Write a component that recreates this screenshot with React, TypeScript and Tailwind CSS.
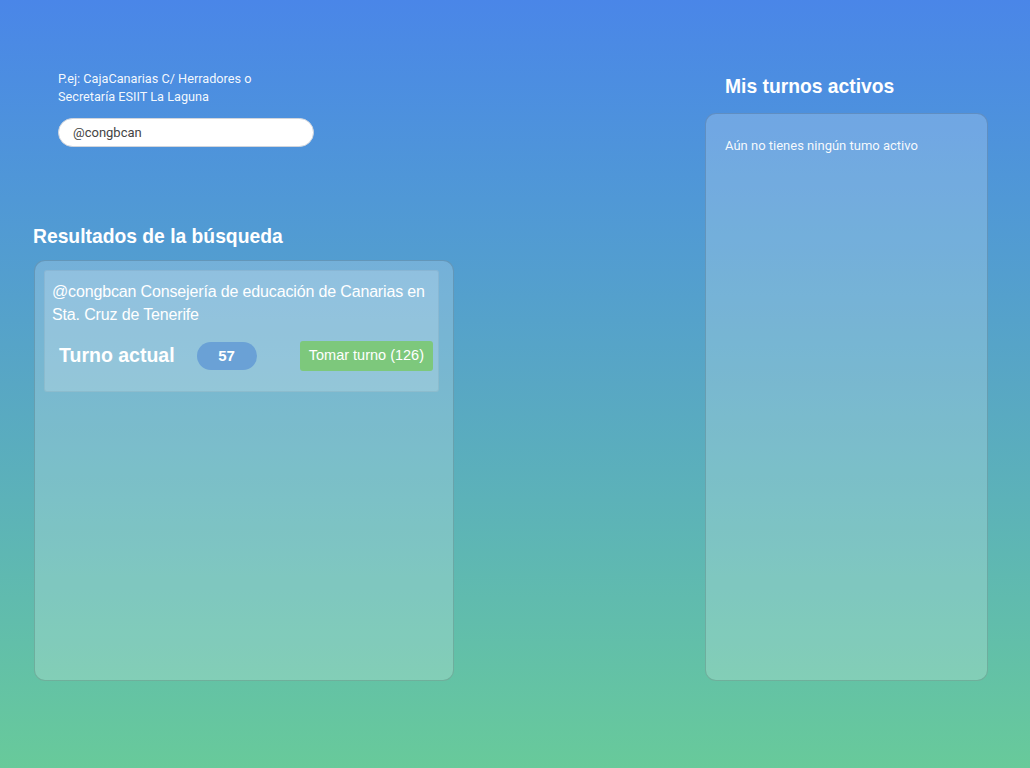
import React from "react";

const sans = { fontFamily: '"Liberation Sans", Arial, sans-serif' };
const roboto = { fontFamily: 'Roboto, "Liberation Sans", sans-serif' };

function SearchBox() {
  return (
    <div className="pl-[25px]" style={roboto}>
      <p className="text-[12.7px] leading-[18px] text-white/95">
        P.ej: CajaCanarias C/ Herradores o
        <br />
        Secretaría ESIIT La Laguna
      </p>
      <div className="mt-[12px] flex h-[29px] w-[256px] items-center rounded-full border border-gray-300 bg-white pl-[14px]">
        <span className="text-[13px] text-[#444]">@congbcan</span>
      </div>
    </div>
  );
}

function ResultCard() {
  return (
    <div className="mr-[14px] rounded-[3px] border border-black/5 bg-white/20 pt-[9px] pr-[5px] pb-[20px] pl-[7px]">
      <p className="text-[16px] leading-[23px] tracking-[-0.15px] text-white" style={sans}>
        @congbcan Consejería de educación de Canarias en Sta. Cruz de Tenerife
      </p>
      <div className="mt-[15px] flex items-center">
        <span className="ml-[7px] text-[19.5px] font-bold text-white" style={sans}>
          Turno actual
        </span>
        <span
          className="ml-[22px] flex h-[28px] w-[60px] items-center justify-center rounded-full bg-[#6aa1d6] text-[15px] font-bold text-white"
          style={sans}
        >
          57
        </span>
        <button
          className="ml-auto flex h-[30px] items-center rounded-[3px] bg-[#7dc87c] px-[9px] text-[14.5px] text-white"
          style={sans}
        >
          Tomar turno (126)
        </button>
      </div>
    </div>
  );
}

export default function App() {
  return (
    <div className="flex h-[768px] w-full bg-linear-to-b from-[#4a86e8] via-[#58a7c4] to-[#68ca9a]">
      <div className="ml-[33px] w-[421px] pt-[70px]">
        <SearchBox />
        <h2 className="mt-[79px] text-[19.3px] leading-[22px] font-bold text-white" style={sans}>
          Resultados de la búsqueda
        </h2>
        <div className="mt-[12px] ml-px h-[421px] rounded-[11px] border border-black/15 bg-white/20 pt-[9px] pl-[9px]">
          <ResultCard />
        </div>
      </div>
      <div className="mr-[42px] ml-auto w-[283px] pt-[76px]">
        <h2 className="ml-[20px] text-[19.3px] leading-[22px] font-bold text-white" style={sans}>
          Mis turnos activos
        </h2>
        <div className="mt-[15px] h-[568px] rounded-[11px] border border-black/15 bg-white/20 px-[19px] pt-[22px]">
          <p className="text-[13px] text-white/95" style={roboto}>
            Aún no tienes ningún tumo activo
          </p>
        </div>
      </div>
    </div>
  );
}
